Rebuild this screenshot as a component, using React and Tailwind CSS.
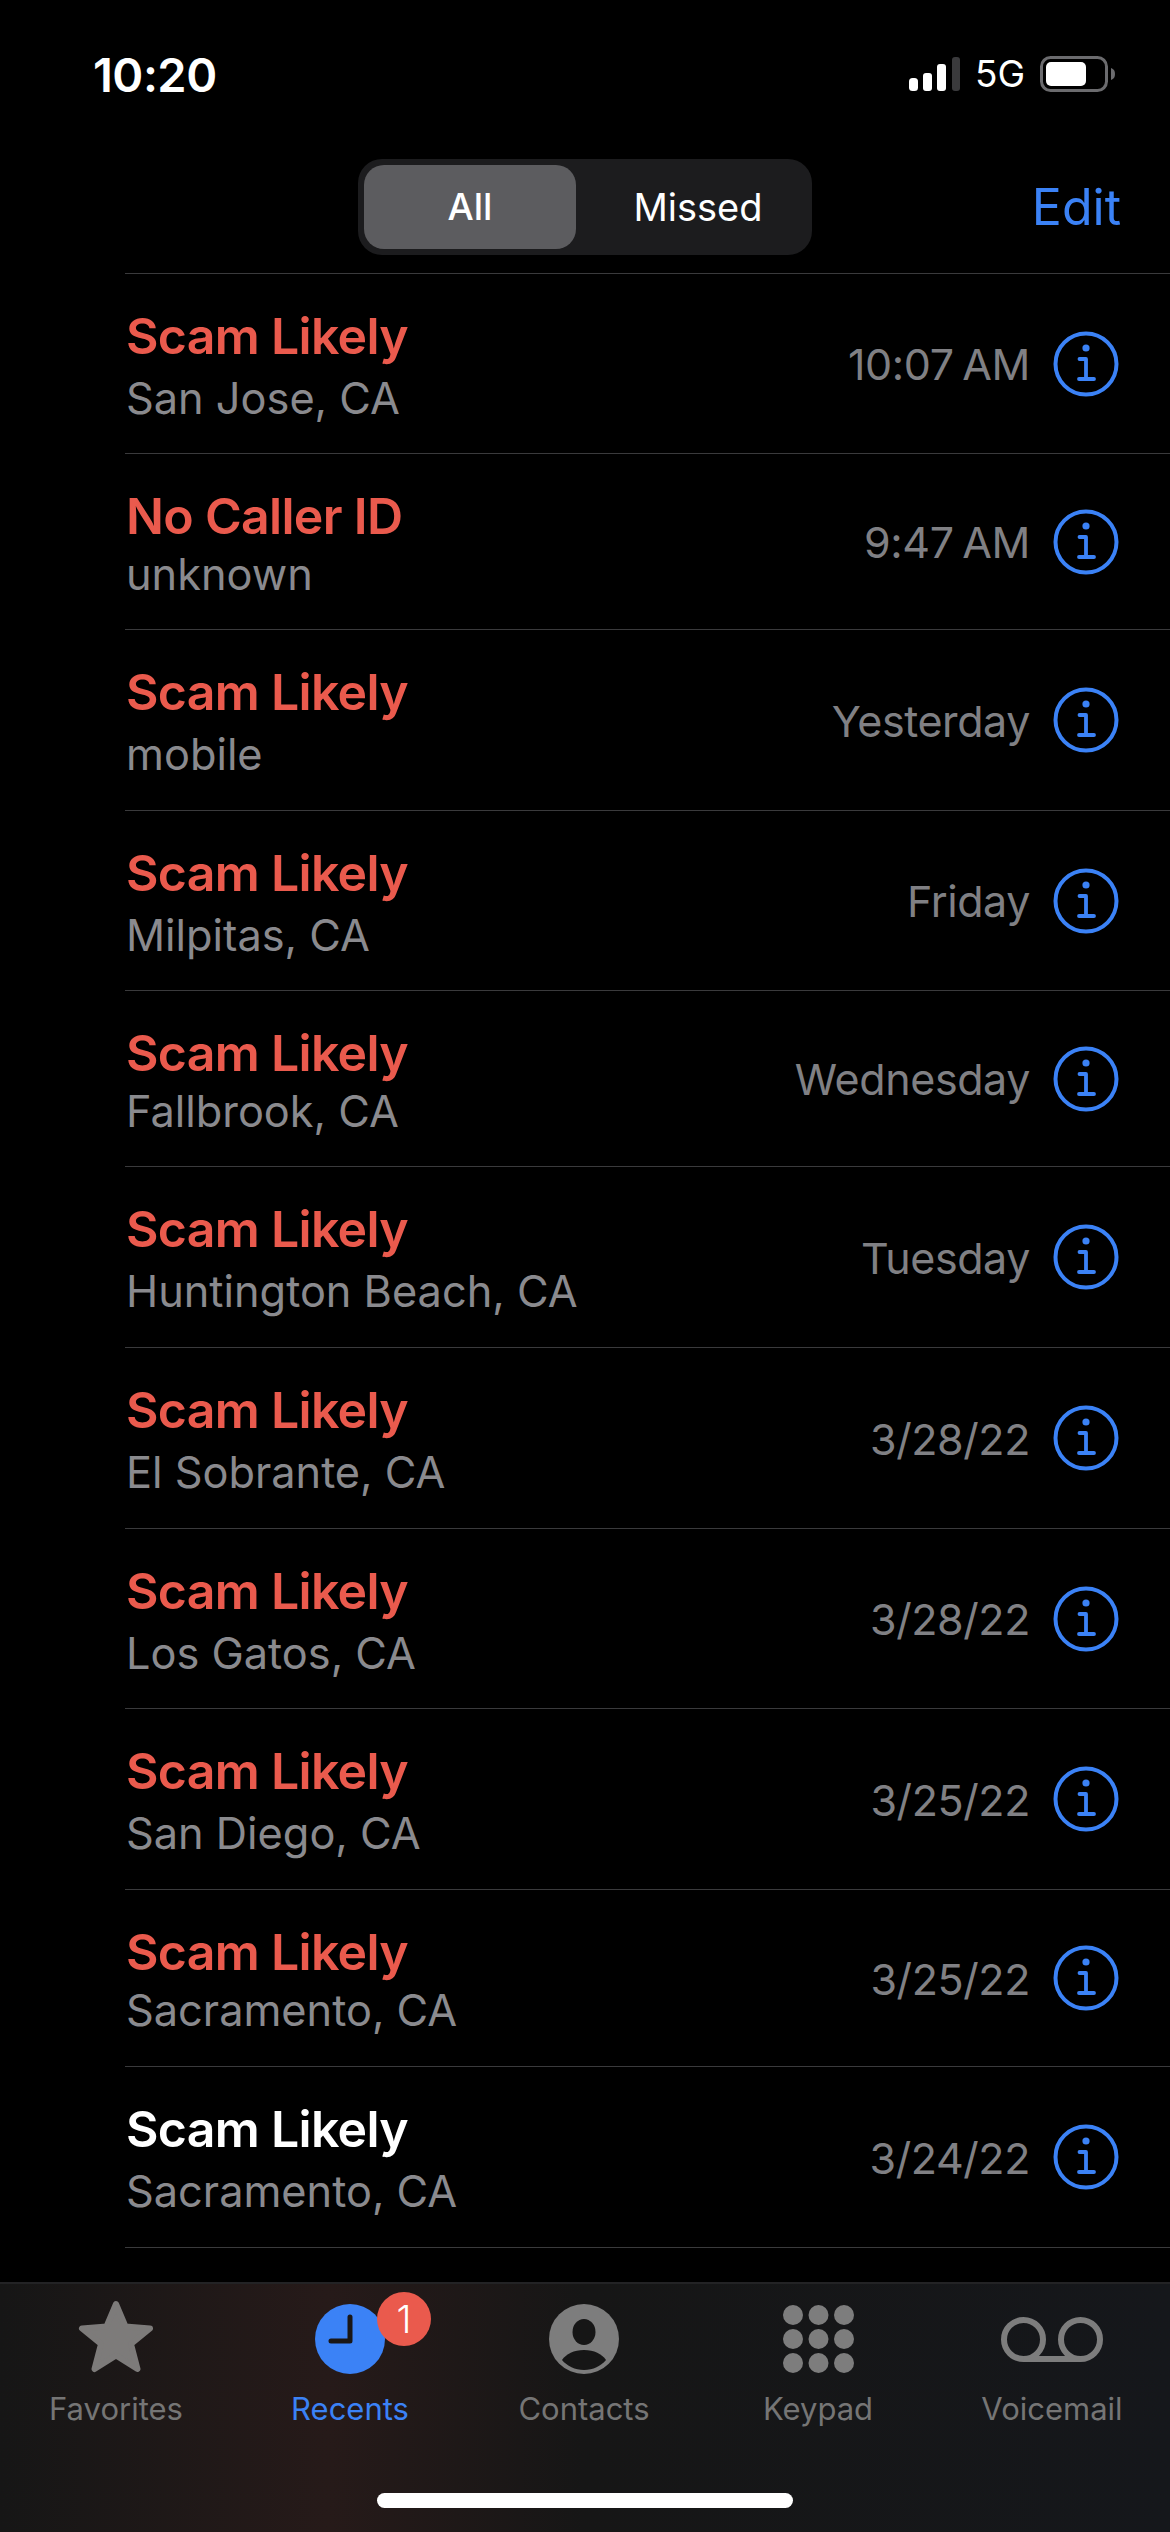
const calls = [
    { name: "Scam Likely", sub: "San Jose, CA", time: "10:07 AM", h: "h-[180px]", gap: "gap-[10px]" },
    { name: "No Caller ID", sub: "unknown", time: "9:47 AM", h: "h-[176px]", gap: "gap-[6px]" },
    { name: "Scam Likely", sub: "mobile", time: "Yesterday", h: "h-[181px]", gap: "gap-[10px]" },
    { name: "Scam Likely", sub: "Milpitas, CA", time: "Friday", h: "h-[180px]", gap: "gap-[10px]" },
    { name: "Scam Likely", sub: "Fallbrook, CA", time: "Wednesday", h: "h-[176px]", gap: "gap-[6px]" },
    { name: "Scam Likely", sub: "Huntington Beach, CA", time: "Tuesday", h: "h-[181px]", gap: "gap-[10px]" },
    { name: "Scam Likely", sub: "El Sobrante, CA", time: "3/28/22", h: "h-[181px]", gap: "gap-[10px]" },
    { name: "Scam Likely", sub: "Los Gatos, CA", time: "3/28/22", h: "h-[180px]", gap: "gap-[10px]" },
    { name: "Scam Likely", sub: "San Diego, CA", time: "3/25/22", h: "h-[181px]", gap: "gap-[10px]" },
    { name: "Scam Likely", sub: "Sacramento, CA", time: "3/25/22", h: "h-[177px]", gap: "gap-[6px]" },
    { name: "Scam Likely", sub: "Sacramento, CA", time: "3/24/22", h: "h-[181px]", gap: "gap-[10px]", answered: true },
];

function InfoIcon() {
    return (
        <svg width="66" height="66" viewBox="0 0 66 66" fill="none" stroke="#3b82f6">
            <circle cx="33" cy="33" r="30.5" strokeWidth="4" />
            <circle cx="33" cy="17" r="3.6" fill="#3b82f6" stroke="none" />
            <path d="M26.5 28h6.5v20M26 48h15" strokeWidth="3.8" strokeLinecap="round" strokeLinejoin="round" />
        </svg>
    );
}

function Signal() {
    return (
        <svg width="51" height="34" viewBox="0 0 51 34">
            <rect x="0" y="21" width="9" height="13" rx="3.5" fill="#fff" />
            <rect x="14" y="16" width="9" height="18" rx="3" fill="#fff" />
            <rect x="28" y="7" width="9" height="27" rx="3" fill="#fff" />
            <rect x="43" y="0" width="8" height="34" rx="3" fill="#3a3a3c" />
        </svg>
    );
}

function Battery() {
    return (
        <svg width="75" height="36" viewBox="0 0 75 36">
            <rect x="1.5" y="1.5" width="65" height="33" rx="9" fill="none" stroke="#6b6b6e" strokeWidth="3" />
            <rect x="6" y="6" width="40" height="24" rx="5" fill="#fff" />
            <path d="M71 12c3 1 4 3 4 6s-1 5-4 6z" fill="#6b6b6e" />
        </svg>
    );
}

function StarIcon() {
    return (
        <svg width="76" height="73" viewBox="0 0 76 73" className="-mt-[5px]">
            <polygon
                points="38,4 47.5,26.5 72,28.5 53,44 59.5,69 38,55.5 16.5,69 23,44 4,28.5 28.5,26.5"
                fill="#7d7b7a"
                stroke="#7d7b7a"
                strokeWidth="6"
                strokeLinejoin="round"
            />
        </svg>
    );
}

function ClockIcon() {
    return (
        <svg width="70" height="70" viewBox="0 0 70 70">
            <circle cx="35" cy="35" r="35" fill="#3b82f6" />
            <path d="M35 13v24H16" fill="none" stroke="#1a1716" strokeWidth="5" strokeLinecap="round" strokeLinejoin="round" />
        </svg>
    );
}

function ContactsIcon() {
    return (
        <svg width="70" height="70" viewBox="0 0 70 70">
            <circle cx="35" cy="35" r="35" fill="#7d7d7d" />
            <ellipse cx="35" cy="28" rx="11.5" ry="13" fill="#161616" />
            <path d="M13 56c4-6 12-10 22-10s18 4 22 10c-5 6-13 10-22 10s-17-4-22-10z" fill="#161616" />
        </svg>
    );
}

function KeypadIcon() {
    const xs = [10, 35.5, 61];
    const ys = [10, 34, 58];
    return (
        <svg width="71" height="68" viewBox="0 0 71 68" fill="#7d7d7d">
            {ys.map((y) => xs.map((x) => <circle key={`${x}-${y}`} cx={x} cy={y} r="10" />))}
        </svg>
    );
}

function VoicemailIcon() {
    return (
        <svg width="102" height="45" viewBox="0 0 102 45" fill="none" stroke="#7d7d7d" strokeWidth="6">
            <circle cx="22.5" cy="22.5" r="19.5" />
            <circle cx="79.5" cy="22.5" r="19.5" />
            <path d="M22.5 42h57" />
        </svg>
    );
}

function TabItem({ label, color, children }) {
    return (
        <div className="flex flex-col items-center w-[234px]">
            <div className="h-[74px] flex items-center justify-center relative w-full">{children}</div>
            <span className={`mt-[16px] text-[31px] leading-[34px] ${color}`}>{label}</span>
        </div>
    );
}

export default function App() {
    return (
        <div className="w-[1170px] h-[2532px] bg-black text-white overflow-hidden flex flex-col font-['Inter','Liberation_Sans',sans-serif]">
            {/* Status bar */}
            <div className="h-[98px] shrink-0 flex items-start justify-between pl-[93px] pr-[55px] pt-[50px]">
                <span className="text-[47px] leading-[50px] font-semibold tracking-[-0.5px]">10:20</span>
                <div className="flex items-center gap-[15px] h-[48px]">
                    <Signal />
                    <span className="text-[37px] leading-[40px]">5G</span>
                    <Battery />
                </div>
            </div>

            {/* Header */}
            <div className="h-[175px] shrink-0 flex items-start relative pt-[61px]">
                <div className="ml-[358px] w-[454px] h-[96px] bg-[#1c1c1e] rounded-[24px] p-[6px] flex items-center">
                    <div className="w-[212px] h-[84px] bg-[#5c5c5f] rounded-[20px] flex items-center justify-center text-[37px] font-medium">All</div>
                    <div className="flex-1 flex items-center justify-center pl-[14px] text-[38px]">Missed</div>
                </div>
                <span className="absolute right-[49px] top-[79px] text-[50px] leading-[60px] text-[#3b82f6]">Edit</span>
            </div>

            {/* Recents list */}
            <div className="ml-[125px] border-t border-[#3a3a3c]">
                {calls.map((c, i) => (
                    <div key={i} className={`${c.h} border-b border-[#3a3a3c] flex items-center justify-between pl-px pr-[51px]`}>
                        <div className={`flex flex-col pt-[4px] ${c.gap}`}>
                            <span className={`text-[50px] leading-[54px] font-semibold tracking-[-0.7px] ${c.answered ? "text-white" : "text-[#ea5a4d]"}`}>{c.name}</span>
                            <span className="text-[43.3px] leading-[50px] text-[#8a8a8e]">{c.sub}</span>
                        </div>
                        <div className="flex items-center gap-[23px]">
                            <span className="pt-[2px] text-[43px] tracking-[-0.4px] [word-spacing:-3px] text-[#808084]">{c.time}</span>
                            <InfoIcon />
                        </div>
                    </div>
                ))}
            </div>

            {/* Tab bar */}
            <div className="mt-auto h-[250px] shrink-0 border-t-2 border-[#232325] bg-[linear-gradient(90deg,#161616_0%,#261a19_28%,#161616_50%,#15171b_100%)] relative">
                <div className="flex -ml-px pt-[18px]">
                    <TabItem label="Favorites" color="text-[#757575]">
                        <StarIcon />
                    </TabItem>
                    <TabItem label="Recents" color="text-[#3b82f6]">
                        <ClockIcon />
                        <div className="absolute left-[144px] top-[-10px] w-[54px] h-[54px] rounded-full bg-[#ea5a4d] flex items-center justify-center text-[38px] font-light">1</div>
                    </TabItem>
                    <TabItem label="Contacts" color="text-[#757575]">
                        <ContactsIcon />
                    </TabItem>
                    <TabItem label="Keypad" color="text-[#757575]">
                        <KeypadIcon />
                    </TabItem>
                    <TabItem label="Voicemail" color="text-[#757575]">
                        <VoicemailIcon />
                    </TabItem>
                </div>
                <div className="absolute left-[377px] top-[209px] w-[416px] h-[15px] rounded-full bg-white" />
            </div>
        </div>
    );
}
